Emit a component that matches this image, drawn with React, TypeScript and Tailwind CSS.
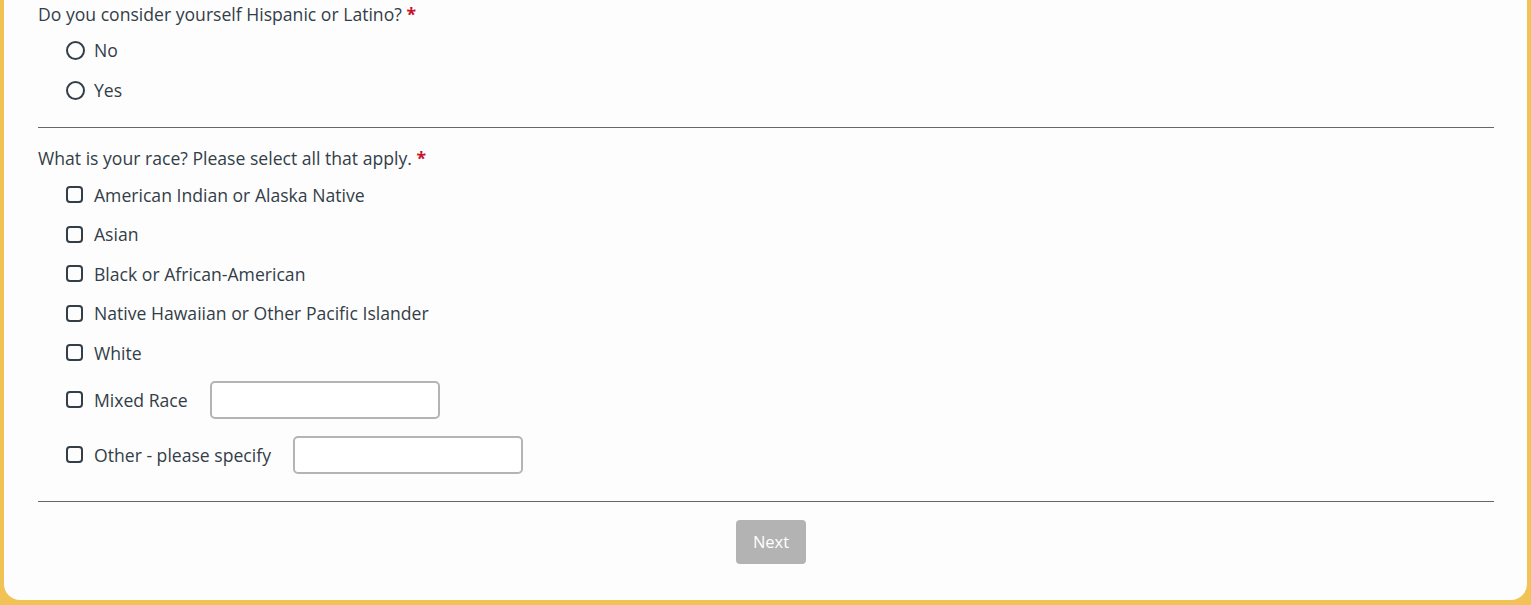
import { useState } from "react";

const RACES = [
  "American Indian or Alaska Native",
  "Asian",
  "Black or African-American",
  "Native Hawaiian or Other Pacific Islander",
  "White",
];

function Radio({ label, checked, onChange }: { label: string; checked: boolean; onChange: () => void }) {
  return (
    <label className="flex h-10 cursor-pointer items-center gap-[9px] pl-[28px]">
      <span className="flex h-[19px] w-[19px] items-center justify-center rounded-full border-2 border-[#333e48]">
        {checked && <span className="h-[9px] w-[9px] rounded-full bg-[#333e48]" />}
      </span>
      <input type="radio" className="hidden" checked={checked} onChange={onChange} />
      <span>{label}</span>
    </label>
  );
}

function Check({ label, checked, onChange }: { label: string; checked: boolean; onChange: () => void }) {
  return (
    <label className="flex cursor-pointer items-center gap-[11px]">
      <span className="flex h-[17px] w-[17px] items-center justify-center rounded-[4px] border-2 border-[#333e48] text-[11px] leading-none">
        {checked && "✓"}
      </span>
      <input type="checkbox" className="hidden" checked={checked} onChange={onChange} />
      <span>{label}</span>
    </label>
  );
}

export default function App() {
  const [hispanic, setHispanic] = useState<string | null>(null);
  const [races, setRaces] = useState<string[]>([]);

  const toggle = (r: string) =>
    setRaces((prev) => (prev.includes(r) ? prev.filter((x) => x !== r) : [...prev, r]));

  return (
    <div className="min-h-[605px] bg-[#f1c354] px-[4px] pb-[5px] font-['Open_Sans',sans-serif] text-[17.6px] leading-6 text-[#333e48]">
      <div className="rounded-b-[16px] bg-[#fdfdfd] pl-[34px] pr-[33px] pt-[2px] pb-[36px]">
        <div>
          Do you consider yourself Hispanic or Latino? <span className="font-bold text-[#c8102e]">*</span>
        </div>
        <div className="mt-[4px]">
          <Radio label="No" checked={hispanic === "No"} onChange={() => setHispanic("No")} />
          <Radio label="Yes" checked={hispanic === "Yes"} onChange={() => setHispanic("Yes")} />
        </div>

        <div className="mt-[17px] h-px bg-[#666]" />

        <div className="mt-[18px]">
          What is your race? Please select all that apply. <span className="font-bold text-[#c8102e]">*</span>
        </div>
        <div className="mt-[5px] pl-[28px]">
          {RACES.map((r) => (
            <div key={r} className="flex h-[39.5px] items-center">
              <Check label={r} checked={races.includes(r)} onChange={() => toggle(r)} />
            </div>
          ))}
          <div className="flex h-[54px] items-center gap-[22px]">
            <Check label="Mixed Race" checked={races.includes("Mixed")} onChange={() => toggle("Mixed")} />
            <input className="h-[38px] w-[230px] rounded-[5px] border-2 border-[#b4b4b8] bg-white px-2 outline-none" />
          </div>
          <div className="flex h-[56px] items-center gap-[22px]">
            <Check label="Other - please specify" checked={races.includes("Other")} onChange={() => toggle("Other")} />
            <input className="h-[38px] w-[230px] rounded-[5px] border-2 border-[#b4b4b8] bg-white px-2 outline-none" />
          </div>
        </div>

        <div className="mt-[18px] h-px bg-[#666]" />

        <div className="mt-[18px] flex justify-center pl-[10px]">
          <button className="h-[44px] w-[70px] rounded-[4px] bg-[#b3b3b3] text-[16.5px] text-white">Next</button>
        </div>
      </div>
    </div>
  );
}
